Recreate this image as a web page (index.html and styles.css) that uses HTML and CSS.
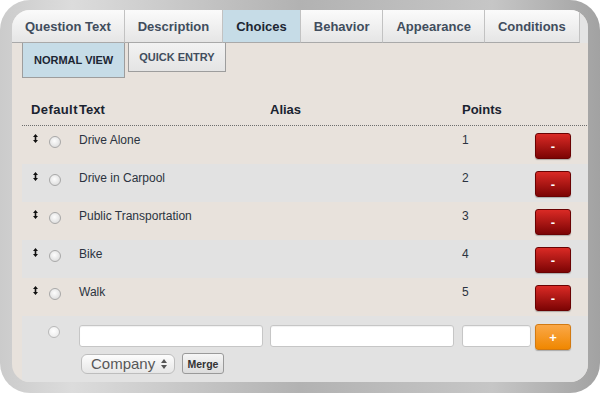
FILE: index.html
```html
<!DOCTYPE html>
<html lang="en">
<head>
    <meta charset="UTF-8">
    <meta name="viewport" content="width=device-width, initial-scale=1.0">
    <title>Choices</title>
    <link rel="stylesheet" href="styles.css">
</head>
<body>

<div class="frame">
    <div class="panel">
        <ul class="tabs">
            <li class="tab">Question Text</li>
            <li class="tab">Description</li>
            <li class="tab active">Choices</li>
            <li class="tab">Behavior</li>
            <li class="tab">Appearance</li>
            <li class="tab">Conditions</li>
        </ul>

        <div class="subtabs">
            <div class="subtab active">NORMAL VIEW</div>
            <div class="subtab">QUICK ENTRY</div>
        </div>

        <div class="choices">
            <div class="choice-row head">
                <div class="col-default">Default</div>
                <div>Text</div>
                <div>Alias</div>
                <div>Points</div>
                <div></div>
            </div>

            <div class="choice-row">
                <div class="col-default">
                    <svg class="drag" width="5" height="9" viewBox="0 0 5 9"><path d="M2.5 0 L5 3 H3.3 V6 H5 L2.5 9 L0 6 H1.7 V3 H0 Z" fill="#111"/></svg>
                    <span class="radio"></span>
                </div>
                <div>Drive Alone</div>
                <div></div>
                <div>1</div>
                <div><button class="btn-remove">-</button></div>
            </div>

            <div class="choice-row alt">
                <div class="col-default">
                    <svg class="drag" width="5" height="9" viewBox="0 0 5 9"><path d="M2.5 0 L5 3 H3.3 V6 H5 L2.5 9 L0 6 H1.7 V3 H0 Z" fill="#111"/></svg>
                    <span class="radio"></span>
                </div>
                <div>Drive in Carpool</div>
                <div></div>
                <div>2</div>
                <div><button class="btn-remove">-</button></div>
            </div>

            <div class="choice-row">
                <div class="col-default">
                    <svg class="drag" width="5" height="9" viewBox="0 0 5 9"><path d="M2.5 0 L5 3 H3.3 V6 H5 L2.5 9 L0 6 H1.7 V3 H0 Z" fill="#111"/></svg>
                    <span class="radio"></span>
                </div>
                <div>Public Transportation</div>
                <div></div>
                <div>3</div>
                <div><button class="btn-remove">-</button></div>
            </div>

            <div class="choice-row alt">
                <div class="col-default">
                    <svg class="drag" width="5" height="9" viewBox="0 0 5 9"><path d="M2.5 0 L5 3 H3.3 V6 H5 L2.5 9 L0 6 H1.7 V3 H0 Z" fill="#111"/></svg>
                    <span class="radio"></span>
                </div>
                <div>Bike</div>
                <div></div>
                <div>4</div>
                <div><button class="btn-remove">-</button></div>
            </div>

            <div class="choice-row">
                <div class="col-default">
                    <svg class="drag" width="5" height="9" viewBox="0 0 5 9"><path d="M2.5 0 L5 3 H3.3 V6 H5 L2.5 9 L0 6 H1.7 V3 H0 Z" fill="#111"/></svg>
                    <span class="radio"></span>
                </div>
                <div>Walk</div>
                <div></div>
                <div>5</div>
                <div><button class="btn-remove">-</button></div>
            </div>

            <div class="new-row">
                <div class="choice-row">
                    <div class="col-default"><span class="radio new"></span></div>
                    <div><input type="text" class="field field-text"></div>
                    <div><input type="text" class="field field-text"></div>
                    <div><input type="text" class="field field-points"></div>
                    <div><button class="btn-add">+</button></div>
                </div>
                <div class="merge-line">
                    <div class="select-box">
                        Company
                        <svg width="6" height="10" viewBox="0 0 6 10"><path d="M3 0 L6 4 H0 Z M3 10 L6 6 H0 Z" fill="#555"/></svg>
                    </div>
                    <button class="btn-merge">Merge</button>
                </div>
            </div>
        </div>
    </div>
</div>

</body>
</html>
```

FILE: styles.css
```css
body {
    margin: 0;
    background-color: #fff;
    font-family: "Liberation Sans", Arial, sans-serif;
    color: #2b3340;
}
.frame {
    width: 600px;
    height: 393px;
    box-sizing: border-box;
    padding: 10px 12px 11px 12px;
    border-radius: 30px;
    background: linear-gradient(to right, #cbcbcb 0%, #dcdcdc 12%, #b2b2b2 50%, #c6c6c6 82%, #a2a2a2 100%);
}
.panel {
    height: 100%;
    display: flex;
    flex-direction: column;
    background-color: #e8e2dc; /* beige panel */
    border-radius: 18px;
    overflow: hidden;
}

/* main tabs */
.tabs {
    display: flex;
    margin: 0;
    padding: 0;
    list-style: none;
    height: 33px;
    flex-shrink: 0;
    background-color: #e4e4e4;
}
.tab {
    display: flex;
    align-items: center;
    flex-shrink: 0;
    white-space: nowrap;
    padding: 0 13px;
    font-size: 13px;
    font-weight: bold;
    color: #414d5d;
    background: linear-gradient(#fbfbfb, #e5e5e5);
    border-right: 1px solid #c2c2c2;
    border-bottom: 1px solid #a9a9a9;
}
.tab.active {
    background: #c6dce7;
    color: #1c2633;
}

/* sub tabs */
.subtabs {
    display: flex;
    align-items: flex-start;
    gap: 3px;
    margin-left: 10px;
    height: 35px;
    flex-shrink: 0;
}
.subtab {
    display: flex;
    align-items: center;
    height: 28px;
    padding: 0 10px;
    font-size: 11px;
    font-weight: bold;
    color: #414d5d;
    background: linear-gradient(#f2f2f2, #e4e4e4);
    border: 1px solid #9d9d9d;
    border-top: none;
}
.subtab.active {
    height: 34px;
    padding: 0 11px;
    color: #1c2633;
    background: #c6dce7;
}

/* choices table */
.choices {
    flex: 1;
    display: flex;
    flex-direction: column;
    margin: 17px 0 0 10px;
}
.choice-row {
    display: grid;
    grid-template-columns: 57px 191px 192px 73px 36px;
    align-items: start;
    height: 38px;
    box-sizing: border-box;
    padding-top: 7px;
    font-size: 12px;
    line-height: 14px;
}
.choice-row.alt {
    background-color: #e2e2e2;
}
.choice-row.head {
    height: 31px;
    padding-top: 8px;
    font-size: 13px;
    font-weight: bold;
    color: #1a2330;
    border-bottom: 1px dotted #6d6d6d;
    margin-right: 1px;
}
.head .col-default {
    padding-left: 9px;
    letter-spacing: 0.4px;
}
.col-default {
    display: flex;
    align-items: flex-start;
    padding-left: 11px;
}
.drag {
    margin-top: 1px;
}
.radio {
    width: 12px;
    height: 12px;
    box-sizing: border-box;
    margin: 3px 0 0 11px;
    border: 1px solid #a8a8a8;
    border-radius: 50%;
    background: radial-gradient(circle at 45% 40%, #fdfdfd, #d5d5d5);
}
.radio.new {
    margin: 2px 0 0 15px;
    border-color: #b9b9b9;
    background: radial-gradient(circle at 45% 40%, #fff, #e6e6e6);
}

.btn-remove,
.btn-add {
    width: 36px;
    height: 26px;
    padding: 0;
    font-family: inherit;
    font-size: 13px;
    font-weight: bold;
    color: #fff;
    border-radius: 3px;
    box-shadow: 0 1px 1px rgba(0, 0, 0, 0.25);
    cursor: pointer;
}
.btn-remove {
    background: linear-gradient(#da2a25, #7c0404);
    border: 1px solid #6a0202;
}
.btn-add {
    background: linear-gradient(#faa848, #f08700);
    border: 1px solid #d27a12;
}

/* new choice row */
.new-row {
    flex: 1;
    background-color: #e2e2e2;
}
.new-row .choice-row {
    height: auto;
    padding-top: 8px;
}
.field {
    display: block;
    height: 22px;
    box-sizing: border-box;
    margin-top: 1px;
    border: 1px solid #c6c6c6;
    border-radius: 3px;
    background-color: #fff;
    box-shadow: inset 0 1px 1px rgba(0, 0, 0, 0.06);
}
.field-text {
    width: 184px;
}
.field-points {
    width: 69px;
}
.merge-line {
    display: flex;
    align-items: center;
    gap: 7px;
    margin: 3px 0 0 59px;
}
.select-box {
    display: flex;
    align-items: center;
    justify-content: space-between;
    width: 94px;
    height: 20px;
    box-sizing: border-box;
    padding: 0 7px 0 9px;
    font-size: 15px;
    color: #585858;
    background: linear-gradient(#fdfdfd, #e6e6e6);
    border: 1px solid #bdbdbd;
    border-radius: 6px;
}
.btn-merge {
    width: 42px;
    height: 21px;
    padding: 0;
    font-family: inherit;
    font-size: 10.5px;
    font-weight: bold;
    color: #333;
    background: linear-gradient(#f6f6f6, #dcdcdc);
    border: 1px solid #9a9a9a;
    border-radius: 3px;
}
```
